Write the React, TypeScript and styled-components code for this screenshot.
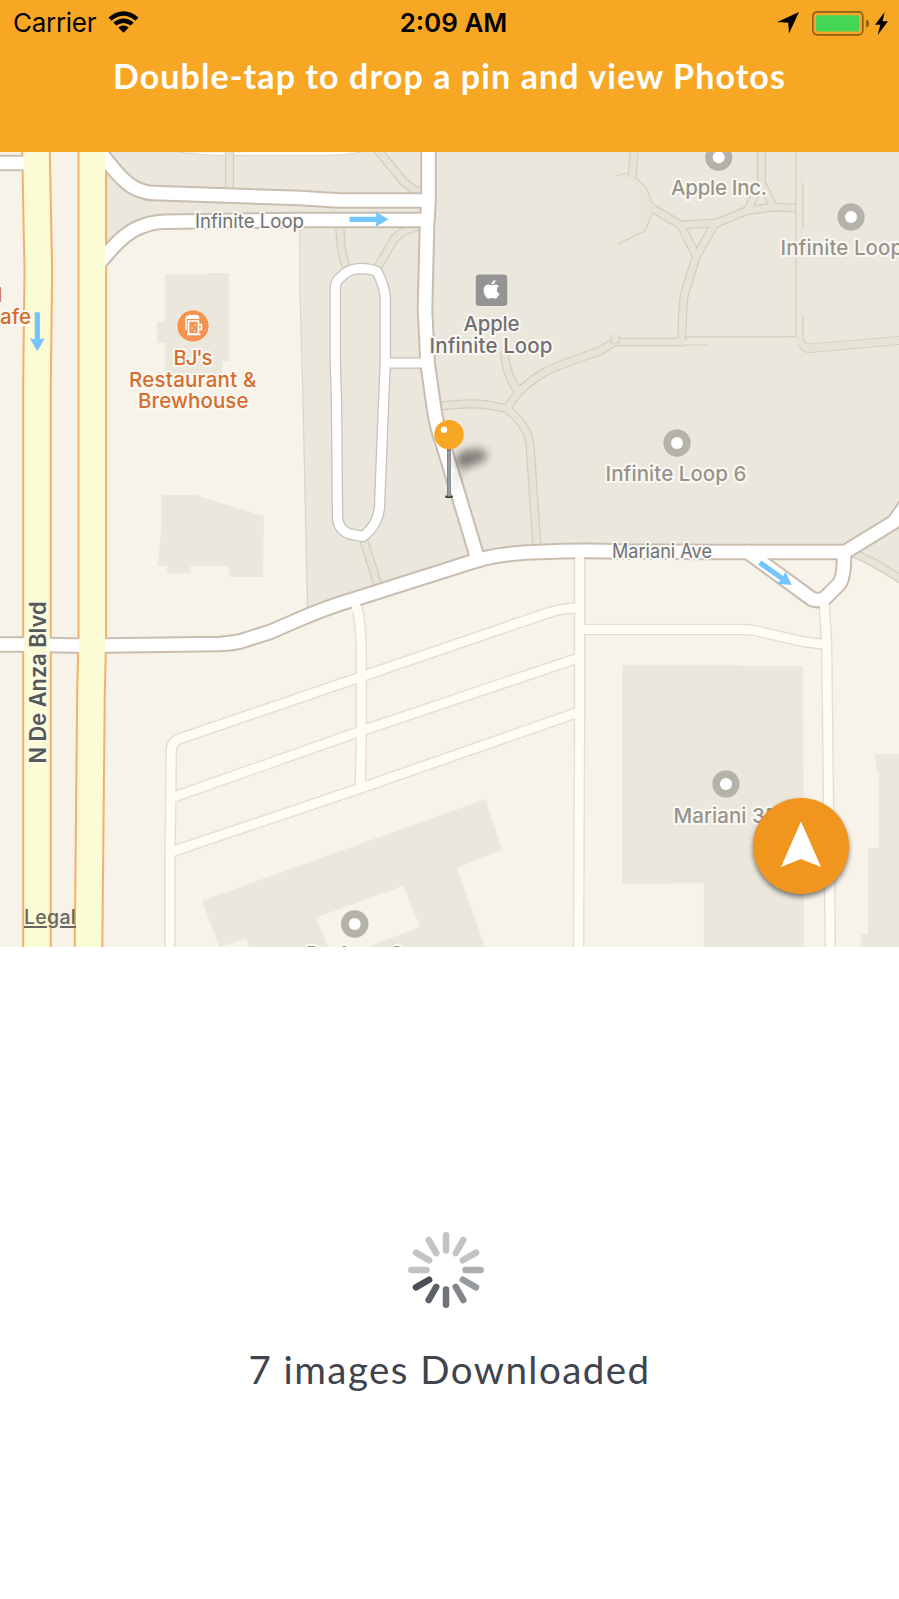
import React from "react";
import styled, { createGlobalStyle } from "styled-components";
import { FaApple } from "react-icons/fa";

const GlobalStyle = createGlobalStyle`
  * { box-sizing: border-box; }
  body { margin: 0; background: #fff; }
`;

const uiFont = `Inter, "Liberation Sans", sans-serif`;
const titleFont = `Lato, "Open Sans", sans-serif`;

const Screen = styled.main`
  display: flex;
  flex-direction: column;
  width: 899px;
  height: 1599px;
  overflow: hidden;
  background: #fff;
`;

const Header = styled.header`
  flex: 0 0 152px;
  background: #f7a723;
`;

const StatusBar = styled.div`
  display: grid;
  grid-template-columns: 1fr auto 1fr;
  align-items: center;
  height: 46px;
  padding: 0 11px 0 13px;
  font-family: ${uiFont};
  font-size: 26px;
  line-height: 46px;
  color: #000;
`;

const Carrier = styled.div`
  display: flex;
  align-items: center;
  gap: 12px;
  letter-spacing: -0.3px;
`;

const Clock = styled.time`
  font-weight: 600;
  letter-spacing: 0;
  margin-right: -6px;
`;

const Indicators = styled.div`
  display: flex;
  align-items: center;
  justify-content: flex-end;
  height: 44px;
`;

const LocationGlyph = styled.svg`
  width: 22px;
  height: 22px;
  margin-right: 13px;
`;

const BatteryGlyph = styled.svg`
  width: 57px;
  height: 25px;
  margin-right: 6px;
`;

const BoltGlyph = styled.svg`
  width: 13px;
  height: 23px;
`;

const WifiGlyph = styled.svg`
  width: 31px;
  height: 22px;
  margin-top: -3px;
`;

const Title = styled.h1`
  margin: 8px 0 0;
  text-align: center;
  font-family: ${titleFont};
  font-size: 34px;
  line-height: 44px;
  font-weight: 700;
  letter-spacing: 1.1px;
  color: #fff;
`;

const MapArea = styled.section`
  position: relative;
  flex: 0 0 795px;
  overflow: hidden;
`;

const MapCanvas = styled.svg`
  display: block;
  width: 899px;
  height: 795px;
`;

const LegalLink = styled.a`
  position: absolute;
  left: 24px;
  bottom: 18px;
  font-family: ${uiFont};
  font-size: 19.5px;
  line-height: 24px;
  font-weight: 500;
  letter-spacing: 0.3px;
  color: #66655f;
  text-decoration: underline;
  text-decoration-thickness: 1.5px;
  text-underline-offset: 2px;
`;

const LocateButton = styled.button`
  position: absolute;
  right: 50px;
  bottom: 53px;
  width: 96px;
  height: 96px;
  padding: 0;
  border: 0;
  border-radius: 50%;
  background: #f0961f;
  box-shadow: 0 3px 5px rgba(0, 0, 0, 0.5);
`;

const Downloads = styled.section`
  flex: 1;
  display: flex;
  flex-direction: column;
  align-items: center;
  padding-top: 284px;
`;

const Spinner = styled.svg`
  width: 78px;
  height: 78px;
  margin-right: 7px;
`;

const Progress = styled.p`
  margin: 33px 0 0;
  font-family: ${titleFont};
  font-size: 38.5px;
  line-height: 54px;
  font-weight: 400;
  letter-spacing: 1.45px;
  color: #40444d;
`;

type RoadKind = "street" | "drive" | "path" | "lot";

const roadStyle: Record<RoadKind, { edge: string; fill: string; outer: number; inner: number }> = {
  street: { edge: "#c9bdb0", fill: "#ffffff", outer: 16.6, inner: 12.6 },
  drive: { edge: "#c6c3bc", fill: "#ffffff", outer: 11.6, inner: 9 },
  path: { edge: "#d4d0bb", fill: "#e5e4d7", outer: 9.2, inner: 6.6 },
  lot: { edge: "#e1ded5", fill: "#fffcf5", outer: 11.5, inner: 8.8 },
};

const roads: Record<RoadKind, string[]> = {
  path: [
    "M376 148L403 181Q411 189 424 194",
    "M229.5 150V192",
    "M339.500 224L341 244Q342 256 347 270",
    "M420 226Q402 230 394 239L377 269",
    "M363 538L379 588",
    "M438 406.500Q470 402 487 405L507 408.500L517 418Q528 430 530 444L537 548",
    "M507 408.500L517 394Q528 382 545 372Q558 365 600 351L614 342H684",
    "M504 351Q506 368 510 377L517.500 392",
    "M681.700 340L682.600 315Q683 297 686 289L696.500 256L680.500 225L652 208",
    "M696.500 256L715.700 222",
    "M680.500 225L717 223L747 210.500L774 207L797 208",
    "M761.500 150V182L748 209",
    "M761 182L773 206",
    "M634.500 150L632 178",
    "M848 551Q870 559 902 580",
  ],
  lot: [
    "M356 600Q361 625 361.300 650V735L360.300 786",
    "M579 607.500L565 609Q556 610 546 613.500L182 738Q171.500 741 171.300 750L170.800 800L170 853V950",
    "M579 657.800L361 731L171 798",
    "M579 712L361 788L171 852",
    "M579.600 550V712L578.600 950",
    "M579.600 629.500H742Q750 629.500 757 631L802 641.500L826 644.500",
    "M824 600L826.700 645L828 760L830.300 950",
  ],
  drive: [
    "M385 363H427",
    "M336.500 400L335.300 362V290Q335 281 341 277Q348 269 360 268.500Q371 268.500 377 271.500Q384 285 385.300 297V362L383.700 400L379.500 507Q378 525 363 536.500L350 534Q338 530 337.500 517Z",
  ],
  street: [
    "M95 146L112 167Q128 187 141 190.500Q147 193 153 193L300 198L340 200.500H424",
    "M95 268L107 254Q126 231 143 226Q152 222 165 221.700L300 220H424",
    "M428.500 148V202L427 225L425 310L427.700 364L434 408Q436 424 443 444L460 500L478 560",
    "M0 644.500H30L70 645.500H105L220 644Q230 643.500 240 641.500L270 632L300 619Q325 608 355 599L470 562.500L483 558.700Q505 553 540 552Q580 550 620 551.500L715 552H845L894 522L906 505",
    "M745 550L812 599Q819 601.500 825 598L839 584Q844 578 844 556",
    "M-5 163H30",
  ],
};

const RoadEdges = ({ kind }: { kind: RoadKind }) => (
  <g fill="none" stroke={roadStyle[kind].edge} strokeWidth={roadStyle[kind].outer} strokeLinejoin="round">
    {roads[kind].map((d) => <path key={d} d={d} />)}
  </g>
);

const RoadFills = ({ kind }: { kind: RoadKind }) => (
  <g fill="none" stroke={roadStyle[kind].fill} strokeWidth={roadStyle[kind].inner} strokeLinejoin="round">
    {roads[kind].map((d) => <path key={d} d={d} />)}
  </g>
);

const boulevards = ["M36 150L38.300 270L37 385V950", "M92.300 150V640L91 690L88.500 950"];

const MapLabel = styled.text<{ $tone: string; $weight?: number; $size?: number; $halo?: string }>`
  font-family: ${uiFont};
  font-size: ${(p) => p.$size ?? 20.5}px;
  font-weight: ${(p) => p.$weight ?? 550};
  fill: ${(p) => p.$tone};
  stroke: ${(p) => p.$halo ?? "#faf8f3"};
  stroke-width: 4px;
  stroke-linejoin: round;
  paint-order: stroke;
`;

const Place = ({ x, y }: { x: number; y: number }) => (
  <g>
    <circle cx={x} cy={y} r={14.3} fill="#f3f0e9" />
    <circle cx={x} cy={y} r={13.7} fill="#b5b2aa" />
    <circle cx={x} cy={y} r={6} fill="#fff" />
  </g>
);

const DirectionArrow = ({ x, y, angle }: { x: number; y: number; angle: number }) => (
  <path
    transform={`translate(${x} ${y}) rotate(${angle})`}
    d="M-39 -2.600H-12L-13 -7.500L0 0L-13 7.500L-12 2.600H-39Z"
    fill="#72c5fd"
  />
);

const spokeColors = [
  "#c2c3c5", "#c2c3c5", "#c2c3c5", "#abadae", "#979b9e", "#82868b",
  "#6f7379", "#5d6168", "#4b4e56", "#c2c3c5", "#c2c3c5", "#c2c3c5",
];

const orange = "#d66d2c";
const gray = "#96938b";
const dark = "#707072";

const StreetMap = () => (
  <MapCanvas viewBox="0 152 899 795" role="img" aria-label="Map">
    <defs>
      <filter id="soft" x="-60%" y="-60%" width="220%" height="220%">
        <feGaussianBlur stdDeviation="4" />
      </filter>
      <linearGradient id="needle" x1="0" x2="1" y1="0" y2="0">
        <stop offset="0" stopColor="#77797c" />
        <stop offset="0.5" stopColor="#a3a5a9" />
        <stop offset="1" stopColor="#85878a" />
      </linearGradient>
      <linearGradient id="plaza" x1="0" x2="1" y1="0" y2="0">
        <stop offset="0" stopColor="#e5e4d7" stopOpacity="0" />
        <stop offset="1" stopColor="#e5e4d7" />
      </linearGradient>
    </defs>

    <rect x="0" y="152" width="899" height="795" fill="#f7f3e8" />
    <path d="M105 152H899V580L848 551H570L483 559L307 608L303 400L300 221L160 221L107 252Z" fill="#ebe7dd" />
    <path d="M300 226V290L303 400L307.500 607" fill="none" stroke="#d8d4c9" strokeWidth="1.200" />
    <path d="M178 152Q200 155.500 230 155.500H320Q350 155.500 364 151Z" fill="#fffdf8" stroke="#d8d5cd" strokeWidth="1" />

    <g fill="#ebe7dd">
      <path d="M165 274.300H206.700V273H229V361H222.300V373.300H165V343H157V321.500H165Z" />
      <path d="M161.300 495H195.300L264 516.300L263 577H229.300L228.700 566H190.300V573.700H166.700V566H157.700L161.300 530Z" />
      <path d="M622.300 665.300H740V666H803L804 947H703.700V883.300H667V884H622Z" />
      <path d="M875 753.700H899V947H861V934H868V848H878.700V770.500H877Z" />
      <path fillRule="evenodd" d="M202 900.700L485 799.300L502.300 850L456.700 868L485 947H368L420 926.700L403.500 885.700L316 917.700L328 947H249.300L246.700 938.300L219.300 947Z" />
    </g>

    <RoadEdges kind="path" />
    <RoadFills kind="path" />
    <path d="M616 174L634 176L646 187L654 206L645 231L616 245Z" fill="url(#plaza)" />
    <path d="M616 176L628 173M635 177L646 187L653 204M652 214L645 231L622 242L618 245" fill="none" stroke="#d4d0bb" strokeWidth="1.200" />
    <rect x="796" y="152" width="6" height="188" fill="#e8e6da" />
    <path d="M611 335V343H619V335" fill="#e5e4d7" stroke="#d4d0bb" strokeWidth="1.200" />
    <path d="M684 345H708.500M685 337.200L795.700 336.700V152M803 183V229M803 315V337Q803 344 810 344L899 336.500M799 345Q801 352 810 352.500L899 344.500" fill="none" stroke="#d4d0bb" strokeWidth="1.200" />
    <path d="M799 337L802.500 338Q803 345 810 345L899 337.500V343.500L810 351.500Q801 351 799 344Z" fill="#e5e4d7" />

    <RoadEdges kind="lot" />
    <RoadFills kind="lot" />
    <RoadEdges kind="drive" />
    <g fill="none" stroke="#f4b06a" strokeWidth="29.600">
      {boulevards.map((d) => <path key={d} d={d} />)}
    </g>
    <RoadEdges kind="street" />
    <RoadFills kind="street" />
    <RoadFills kind="drive" />
    <path d="M355.500 603L357 612" stroke="#fffcf5" strokeWidth="8.800" />
    <path d="M579.600 556V562" stroke="#fffcf5" strokeWidth="8.800" />
    <path d="M824 602L824.700 612" stroke="#fffcf5" strokeWidth="8.800" />
    <g fill="none" stroke="#fbfbd6" strokeWidth="25.600">
      {boulevards.map((d) => <path key={d} d={d} />)}
    </g>

    <DirectionArrow x={388.500} y={219.300} angle={0} />
    <DirectionArrow x={37.300} y={351.300} angle={90} />
    <DirectionArrow x={791.700} y={585} angle={35} />

    <MapLabel x="195" y="227.500" $tone="#717274" $weight={400} $size={19.500} textLength="109" lengthAdjust="spacingAndGlyphs">Infinite Loop</MapLabel>
    <MapLabel x="612" y="557.700" $tone="#717274" $weight={400} $size={19.500} textLength="100" lengthAdjust="spacingAndGlyphs">Mariani Ave</MapLabel>
    <MapLabel x="2.500" y="301.700" $tone={orange} textAnchor="end">l</MapLabel>
    <MapLabel x="31" y="323.500" $tone={orange} textAnchor="end">Cafe</MapLabel>

    <circle cx="193" cy="326" r="16.300" fill="#f7f3e8" />
    <circle cx="193" cy="326" r="15.700" fill="#f49351" />
    <g fill="none" stroke="#fff" strokeWidth="1.600">
      <path d="M188.500 321V334H198.500V321Z" />
      <path d="M199 324.500H201.400V329.500H199" />
      <path d="M187 334.500H200.500" />
      <path d="M186 318V330" />
      <path d="M186.500 317.500Q186 315.500 188.500 316Q190 314.500 192 315.800Q194 314.200 196 315.600Q199 315 199 318.500H186.500Z" fill="#fff" strokeWidth="1" />
    </g>
    <g fill="#fff">
      <rect x="194.500" y="324.500" width="1.300" height="1.300" />
      <rect x="191.500" y="327.500" width="1.300" height="1.300" />
      <rect x="194" y="330" width="1.300" height="1.300" />
    </g>
    <MapLabel x="173.500" y="364.700" $tone={orange} textLength="39">BJ's</MapLabel>
    <MapLabel x="129" y="386.500" $tone={orange} textLength="127.500">Restaurant &amp;</MapLabel>
    <MapLabel x="138" y="408" $tone={orange} textLength="110.500">Brewhouse</MapLabel>

    <rect x="475" y="273.800" width="33" height="33" rx="4.500" fill="#f3f0e9" />
    <rect x="475.700" y="274.500" width="31.600" height="31.600" rx="3.600" fill="#949494" />
    <FaApple x={480.800} y={278.600} size={21.400} color="#fff" />
    <MapLabel x="463.500" y="330.700" $tone={dark} textLength="56">Apple</MapLabel>
    <MapLabel x="429.500" y="352.500" $tone={dark} textLength="123">Infinite Loop</MapLabel>

    <Place x={718.700} y={157.300} />
    <MapLabel x="671" y="194.800" $tone={gray} textLength="96">Apple Inc.</MapLabel>
    <Place x={851} y={217} />
    <MapLabel x="780.500" y="255.300" $tone={gray} textLength="141">Infinite Loop 5</MapLabel>
    <Place x={677} y={443} />
    <MapLabel x="605.500" y="481.200" $tone={gray} textLength="141">Infinite Loop 6</MapLabel>
    <Place x={726} y={784} />
    <MapLabel x="673.500" y="822.500" $tone={gray} textLength="104">Mariani 35</MapLabel>
    <Place x={354.700} y={924} />
    <MapLabel x="306" y="961.300" $tone={gray} textLength="97">De Anza 3</MapLabel>

    <MapLabel transform="translate(45.800 763.500) rotate(-90)" $tone="#58585a" $weight={600} $size={22.500} $halo="#fcfce6" textLength="162" lengthAdjust="spacingAndGlyphs">N De Anza Blvd</MapLabel>

    <ellipse cx="471" cy="457.500" rx="16.500" ry="8.500" transform="rotate(-12 471 457.500)" fill="#000" opacity="0.420" filter="url(#soft)" />
    <path d="M450 495L463 455L471 461Z" fill="#000" opacity="0.180" filter="url(#soft)" />
    <ellipse cx="449" cy="496.500" rx="4" ry="1.600" fill="#333538" />
    <rect x="447" y="446" width="4" height="50.500" fill="url(#needle)" />
    <rect x="447" y="448" width="4" height="3" fill="#5d5e60" opacity="0.600" />
    <circle cx="449" cy="434.700" r="14.700" fill="#f7a723" />
    <circle cx="444" cy="429.800" r="3.200" fill="#fff" />
  </MapCanvas>
);

export default function App() {
  return (
    <Screen>
      <GlobalStyle />
      <Header>
        <StatusBar>
          <Carrier>
            Carrier
            <WifiGlyph viewBox="0 0 31 22">
              <path d="M0.500 6.500Q15.500 -6 30.500 6.500L27.500 9.800Q15.500 -0.200 3.500 9.800Z" />
              <path d="M5.300 11.500Q15.500 3.300 25.700 11.500L22.700 14.600Q15.500 9.200 8.300 14.600Z" />
              <path d="M10.300 16.500Q15.500 12.500 20.700 16.500L15.500 21.700Z" />
            </WifiGlyph>
          </Carrier>
          <Clock>2:09 AM</Clock>
          <Indicators>
            <LocationGlyph viewBox="0 0 22 22">
              <path d="M22 0L12 21.500L11.300 10.700L0.300 10Z" />
            </LocationGlyph>
            <BatteryGlyph viewBox="0 0 57 25">
              <rect x="0.800" y="0.800" width="50" height="23" rx="4.500" fill="none" stroke="#8f6018" strokeWidth="1.700" />
              <rect x="4" y="4.300" width="43.300" height="16.200" rx="2" fill="#44d655" />
              <path d="M54 8.500Q57 9 57 12.500Q57 16 54 16.500Z" fill="#8f6018" />
            </BatteryGlyph>
            <BoltGlyph viewBox="0 0 13 23">
              <path d="M9.700 0L0 12.800H5.300L2.700 23L13 9.300H7.500Z" />
            </BoltGlyph>
          </Indicators>
        </StatusBar>
        <Title>Double-tap to drop a pin and view Photos</Title>
      </Header>
      <MapArea>
        <StreetMap />
        <LegalLink>Legal</LegalLink>
        <LocateButton aria-label="Center on my location">
          <svg width="96" height="96" viewBox="0 0 96 96">
            <path d="M48 23.500L68 69L47.800 61L28 69Z" fill="#fff" />
          </svg>
        </LocateButton>
      </MapArea>
      <Downloads>
        <Spinner viewBox="-39 -39 78 78">
          {spokeColors.map((color, i) => (
            <line key={i} x1="0" y1="-34.700" x2="0" y2="-19.500" stroke={color} strokeWidth="6.500" strokeLinecap="round" transform={`rotate(${i * 30})`} />
          ))}
        </Spinner>
        <Progress>7 images Downloaded</Progress>
      </Downloads>
    </Screen>
  );
}
